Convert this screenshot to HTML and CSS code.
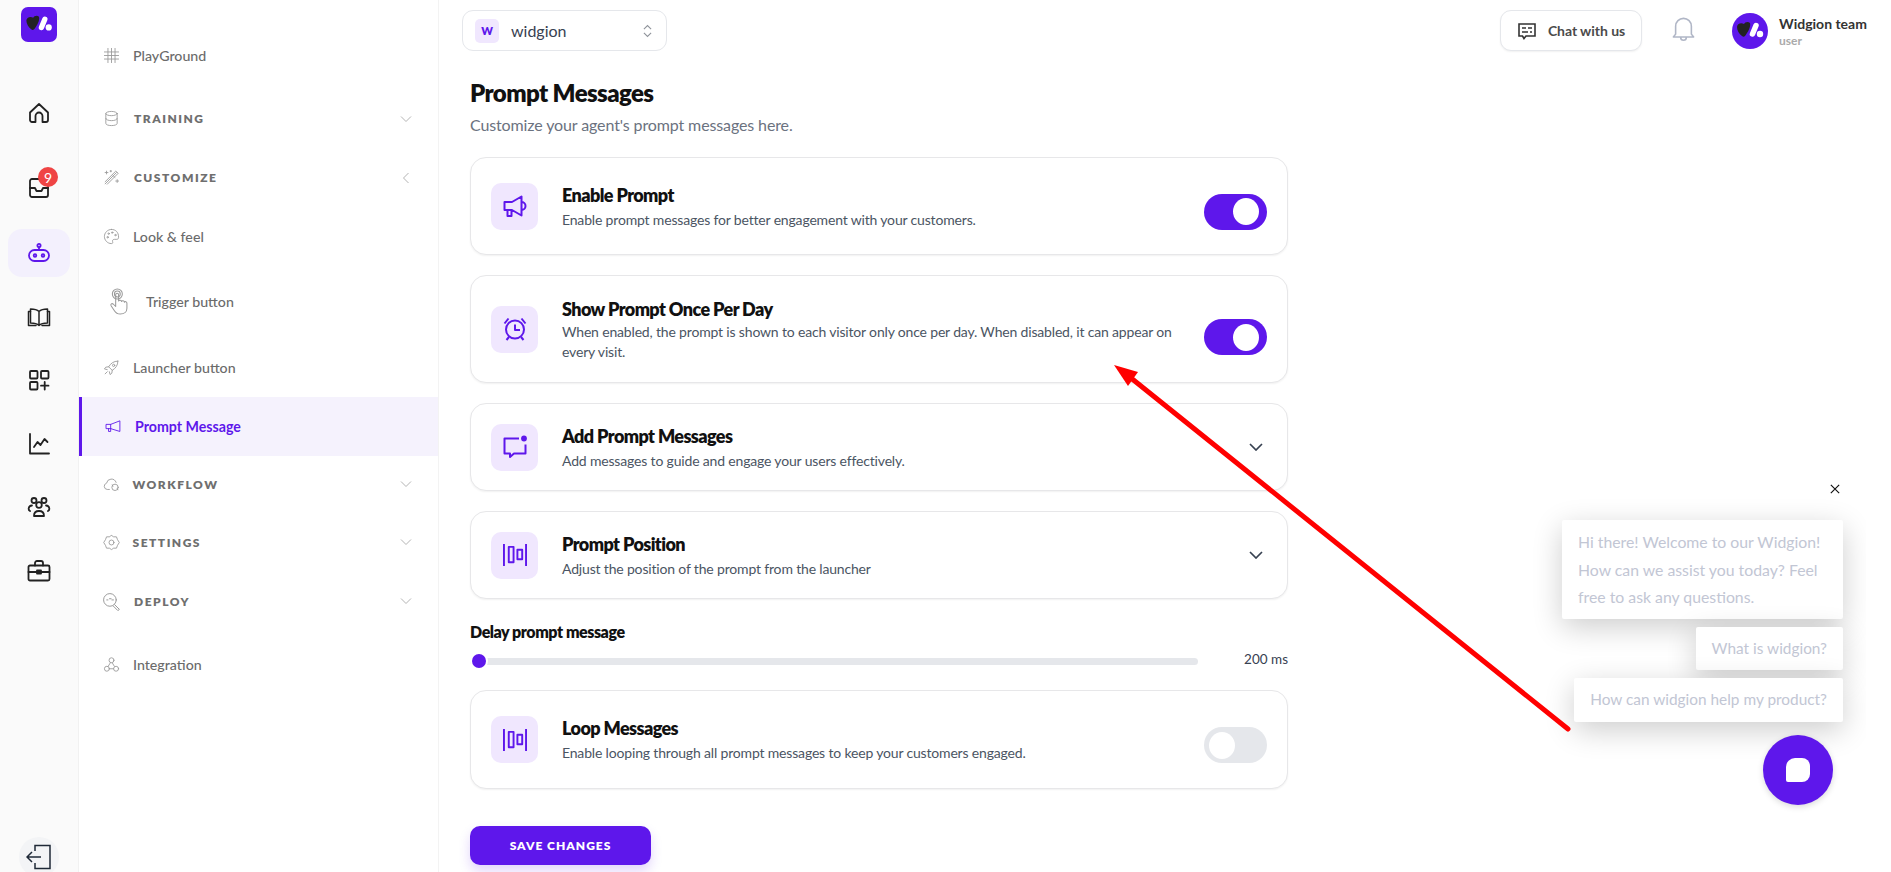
FILE: index.html
```html
<!DOCTYPE html>
<html lang="en">
<head>
<meta charset="utf-8">
<title>Prompt Messages</title>
<link rel="stylesheet" href="styles.css">
</head>
<body>
<div class="app">
  <nav class="rail">
    <div class="rail-logo">
      <svg viewBox="0 0 36 36" width="36" height="35"><path d="M5 14c0-3 4-5 7-3 1-2 4-3 6-1 1 4-2 9-5 13-1 1-2 1-3 0-3-2-5-6-5-9z" fill="#222"/><path d="M24 12.500 20.500 21" stroke="#fff" stroke-width="5.500" stroke-linecap="round"/><circle cx="28" cy="21" r="3.200" fill="#fff"/></svg>
    </div>
    <a class="rail-item rail-first"><svg class="ri" viewBox="0 0 24 24"><path d="M3 11.500 12 3l9 8.500V19a2 2 0 0 1-2 2h-3.500v-6a3.500 3.500 0 0 0-7 0v6H5a2 2 0 0 1-2-2z"/></svg></a>
    <a class="rail-item rail-inbox">
      <svg class="ri" viewBox="0 0 24 24"><path d="M5 3h14a2 2 0 0 1 2 2v14a2 2 0 0 1-2 2H5a2 2 0 0 1-2-2V5a2 2 0 0 1 2-2z"/><path d="M3 12h5l1.500 3h5l1.500-3h5"/></svg>
      <span class="badge">9</span>
    </a>
    <a class="rail-item rail-active"><svg class="ri ri-bot" viewBox="0 0 24 24"><circle cx="12" cy="3.500" r="1.600"/><path d="M12 5.100V8"/><rect x="2" y="8" width="20" height="11" rx="5.500"/><circle cx="8" cy="13.500" r="1.300"/><circle cx="16" cy="13.500" r="1.300"/></svg></a>
    <a class="rail-item"><svg class="ri ri-thin" viewBox="0 0 24 24"><path d="M12 6.500C10 4.500 7 4 3.500 4v14c3.500 0 6.500.5 8.500 2.500 2-2 5-2.500 8.500-2.500V4C17 4 14 4.500 12 6.500zM12 6.500v14"/><path d="M3.500 6.500H1.500v14H9M20.500 6.500h2v14H15"/></svg></a>
    <a class="rail-item"><svg class="ri" viewBox="0 0 24 24"><rect x="3" y="3" width="7.500" height="7.500" rx="1"/><rect x="14" y="3" width="7.500" height="7.500" rx="1"/><rect x="3" y="14" width="7.500" height="7.500" rx="1"/><path d="M17.700 14v7.500M14 17.700h7.500"/></svg></a>
    <a class="rail-item"><svg class="ri" viewBox="0 0 24 24"><path d="M3 2v19.500h19"/><path d="M7 15l3.500-5 3 3 4-6 3 3"/></svg></a>
    <a class="rail-item"><svg class="ri" viewBox="0 0 24 24"><circle cx="12" cy="10" r="2.800"/><circle cx="7" cy="5.500" r="2.500"/><circle cx="17" cy="5.500" r="2.500"/><path d="M7 21c0-3 2-5 5-5s5 2 5 5zM3 16c-2-1-2-5 2-5.500M21 16c2-1 2-5-2-5.500"/></svg></a>
    <a class="rail-item"><svg class="ri" viewBox="0 0 24 24"><rect x="1.500" y="6.500" width="21" height="15" rx="1.500"/><path d="M8 6.500V4a2 2 0 0 1 2-2h4a2 2 0 0 1 2 2v2.500M1.500 13h21"/><rect x="10" y="11.500" width="4" height="3" fill="#222" /></svg></a>
    <a class="rail-logout"><svg viewBox="0 0 26 26" width="26" height="26" fill="none" stroke="#1f2937" stroke-width="1.500"><path d="M9 7V1.500h15v23H9V19M1 13h14M6 8l-5 5 5 5"/></svg></a>
  </nav>

  <aside class="side">
    <a class="row r-67"><svg class="si" viewBox="0 0 24 24"><path d="M2 7h20M2 12h20M2 17h20M7 2v20M12 2v20M17 2v20"/></svg><span>PlayGround</span></a>
    <a class="row group"><svg class="si" viewBox="0 0 24 24"><ellipse cx="12" cy="5" rx="8" ry="3"/><path d="M4 5v14c0 1.700 3.500 3 8 3s8-1.300 8-3V5M4 12c0 1.700 3.500 3 8 3s8-1.300 8-3"/></svg><b>TRAINING</b><svg class="caret" viewBox="0 0 12 12"><path d="M1 3.500l5 5 5-5"/></svg></a>
    <a class="row group"><svg class="si" viewBox="0 0 24 24"><path d="M3 21 19 5M6 21.500 21.500 6 18 3 3 18M14 9l3 3M5 3v4M3 5h4M20 15v4M18 17h4M11 2v2M10 3h2"/></svg><b>CUSTOMIZE</b><svg class="caret" viewBox="0 0 12 12"><path d="M8.500 1l-5 5 5 5"/></svg></a>
    <a class="row"><svg class="si" viewBox="0 0 24 24"><path d="M12 2C6 2 2 7 2 12s4 10 10 10c2 0 2-1.500 1.500-3-.5-2 1-3 3-3h3c1.500 0 2.500-1 2.500-3C22 6 18 2 12 2z"/><circle cx="8" cy="8" r="1"/><circle cx="6.500" cy="13" r="1"/><circle cx="13" cy="6.500" r="1"/><circle cx="17.500" cy="10" r="1"/></svg><span>Look &amp; feel</span></a>
    <a class="row r-71"><svg class="si si-big" viewBox="0 0 24 32"><circle cx="10" cy="7" r="6"/><circle cx="10" cy="7" r="3.500"/><path d="M8 8v14l-3-3c-1.500-1-3.500 0-2.500 2l4 6c1.500 2.500 3.500 4 7 4 5 0 8-3 8-7v-6c0-2-2.500-2.500-3-1 0-2-3-2.500-3.500-1 0-2-3-2-3.500-.5V8c0-2.500-3.500-2.500-3.500 0z"/></svg><span>Trigger button</span></a>
    <a class="row r-60"><svg class="si" viewBox="0 0 24 24"><path d="M21 3c-6 0-10 3-13 8l5 5c5-3 8-7 8-13zM8 11l-4 .5L2 14l4 1M13 16l-.5 4-2.500 2-1-4"/><circle cx="15" cy="9" r="1.600"/><path d="M6 18l-3 3" /></svg><span>Launcher button</span></a>
    <a class="row active"><svg class="si" viewBox="0 0 24 24"><path d="M2 9h6l13-5v15L8 15H2zM8 9v6M5 15v4h3v-4"/></svg><span>Prompt Message</span></a>
    <a class="row group r-56"><svg class="si" viewBox="0 0 24 24"><path d="M9 19H6a4.500 4.500 0 0 1-1-8.800A7 7 0 0 1 18.500 9"/><circle cx="17" cy="16" r="4.500"/><path d="M13 12.500l1 2M21 19.500l-1-2"/></svg><b class="near">WORKFLOW</b><svg class="caret" viewBox="0 0 12 12"><path d="M1 3.500l5 5 5-5"/></svg></a>
    <a class="row group r-60"><svg class="si" viewBox="0 0 24 24"><path d="M12 2l3 2h4l1.500 4L23 12l-2.500 4L19 20h-4l-3 2-3-2H5l-1.500-4L1 12l2.500-4L5 4h4z"/><circle cx="12" cy="12" r="3.500"/></svg><b class="near">SETTINGS</b><svg class="caret" viewBox="0 0 12 12"><path d="M1 3.500l5 5 5-5"/></svg></a>
    <a class="row group r-58"><svg class="si si-deploy" viewBox="0 0 24 24"><circle cx="10" cy="10" r="8"/><path d="M6 10h1.500M9.500 8.500l2 0M12.500 10h2M16 16l6 6-2 1.500-6-6"/></svg><b class="far">DEPLOY</b><svg class="caret" viewBox="0 0 12 12"><path d="M1 3.500l5 5 5-5"/></svg></a>
    <a class="row r-68"><svg class="si" viewBox="0 0 24 24"><circle cx="12" cy="6" r="3.500"/><circle cx="5.500" cy="18" r="3.500"/><circle cx="18.500" cy="18" r="3.500"/><path d="M10.500 9.500 7 15M13 9.500l3 5M9 18h6"/></svg><span>Integration</span></a>
  </aside>

  <main class="main">
    <header class="top">
      <div class="select">
        <span class="select-mark">W</span>
        <span class="select-name">widgion</span>
        <svg class="updown" viewBox="0 0 10 14"><path d="M1 5l4-4 4 4M1 9l4 4 4-4"/></svg>
      </div>
      <div class="top-right">
        <button class="chat">
          <svg viewBox="0 0 20 20" width="20" height="20" fill="none" stroke="#333" stroke-width="1.600"><path d="M2 3h16v12H9l-2 2.500L5.500 15H2z"/><path d="M5 7h4M11 7h4M5 11h6M13 11h2"/></svg>
          Chat with us
        </button>
        <svg class="bell" viewBox="0 0 24 24"><path d="M5 17V10a7 7 0 0 1 14 0v7l2 2.500H3zM9.500 20a2.500 2.500 0 0 0 5 0"/></svg>
        <div class="user">
          <span class="avatar"><svg viewBox="0 0 36 36" width="36" height="36"><path d="M5 14c0-3 4-5 7-3 1-2 4-3 6-1 1 4-2 9-5 13-1 1-2 1-3 0-3-2-5-6-5-9z" fill="#222"/><path d="M24 12.500 20.500 21" stroke="#fff" stroke-width="5.500" stroke-linecap="round"/><circle cx="28" cy="21" r="3.200" fill="#fff"/></svg></span>
          <div class="user-text"><strong>Widgion team</strong><small>user</small></div>
        </div>
      </div>
    </header>

    <section class="content">
      <h1>Prompt Messages</h1>
      <p class="sub">Customize your agent's prompt messages here.</p>

      <div class="card c-98">
        <span class="ic"><svg viewBox="0 0 24 24"><path d="M1.500 8h7.500L18.500 2.500v19L9 16H1.500zM4.500 16v6h4v-6M18.500 8a4 4 0 0 1 0 8"/></svg></span>
        <div class="txt"><h3>Enable Prompt</h3><p>Enable prompt messages for better engagement with your customers.</p></div>
        <span class="toggle on t-low"></span>
      </div>

      <div class="card c-108">
        <span class="ic"><svg viewBox="0 0 24 24"><circle cx="12" cy="12.500" r="9"/><path d="M12 7.500v5.500h5M1.500 6.500l4-5M22.500 6.500l-4-5M6 20l-2.500 3M18 20l2.500 3"/></svg></span>
        <div class="txt"><h3>Show Prompt Once Per Day</h3><p>When enabled, the prompt is shown to each visitor only once per day. When disabled, it can appear on every visit.</p></div>
        <span class="toggle on t-lower"></span>
      </div>

      <div class="card c-88">
        <span class="ic"><svg viewBox="0 0 24 24"><path d="M16 3.500H1.500v15h5.500V22l4-3.500h11.500v-9"/><circle cx="21" cy="3.500" r="2.900" fill="#5e17eb" stroke="none"/></svg></span>
        <div class="txt"><h3>Add Prompt Messages</h3><p>Add messages to guide and engage your users effectively.</p></div>
        <svg class="chev" viewBox="0 0 14 8"><path d="M1 1l6 6 6-6"/></svg>
      </div>

      <div class="card c-88 last">
        <span class="ic"><svg viewBox="0 0 25 25"><path d="M1 1v23M24 1v23M6 4h5v16H6zM15 7h5v10h-5z"/></svg></span>
        <div class="txt"><h3>Prompt Position</h3><p>Adjust the position of the prompt from the launcher</p></div>
        <svg class="chev" viewBox="0 0 14 8"><path d="M1 1l6 6 6-6"/></svg>
      </div>

      <div class="delay">
        <h4>Delay prompt message</h4>
        <div class="slider">
          <span class="track"><i class="thumb"></i></span>
          <span class="val">200 ms</span>
        </div>
      </div>

      <div class="card c-99">
        <span class="ic"><svg viewBox="0 0 25 25"><path d="M1 1v23M24 1v23M6 4h5v16H6zM15 7h5v10h-5z"/></svg></span>
        <div class="txt"><h3>Loop Messages</h3><p>Enable looping through all prompt messages to keep your customers engaged.</p></div>
        <span class="toggle t-low"></span>
      </div>

      <button class="save">SAVE CHANGES</button>
    </section>
  </main>
</div>

<div class="widget">
  <span class="close"><svg viewBox="0 0 12 12" width="10" height="10"><path d="M1 1l10 10M11 1L1 11"/></svg></span>
  <div class="bubbles">
    <div class="bubble big">Hi there! Welcome to our Widgion! How can we assist you today? Feel free to ask any questions.</div>
    <div class="bubble">What is widgion?</div>
    <div class="bubble b3">How can widgion help my product?</div>
  </div>
</div>
<button class="launcher"><svg viewBox="0 0 24 24" width="24" height="24"><path d="M9 0h7a8 8 0 0 1 8 8v8a8 8 0 0 1-8 8H2a2 2 0 0 1-2-2V9a9 9 0 0 1 9-9z" fill="#fff"/></svg></button>

<svg class="arrow" viewBox="0 0 1891 872" width="1891" height="872"><path d="M1568 729 1126 374" stroke="#ff0000" stroke-width="5" stroke-linecap="round" fill="none"/><path d="M1114 365l24 7-10 14z" fill="#ff0000"/></svg>
</body>
</html>
```

FILE: styles.css
```css
* { box-sizing: border-box; }
html, body { margin: 0; height: 100%; overflow: hidden; }
body { font-family: Lato, "Liberation Sans", sans-serif; background: #fff; color: #111; }
a { color: inherit; text-decoration: none; }
h1, h3, h4, p { margin: 0; }

.app { display: flex; height: 872px; }

/* icon rail */
.rail { width: 79px; flex: none; background: #fafafa; border-right: 1px solid #f1f1f1; display: flex; flex-direction: column; align-items: center; padding-top: 7px; position: relative; }
.rail-logo { width: 36px; height: 35px; background: #5e17eb; border-radius: 7px; overflow: hidden; margin-bottom: 47px; margin-right: 1px; }
.rail-logo svg { display: block; }
.rail-item { width: 62px; height: 48px; display: flex; align-items: center; justify-content: center; position: relative; margin-bottom: 15.500px; border-radius: 14px; flex: none; }
.rail-first { margin-bottom: 27px; }
.rail-inbox { margin-bottom: 17px; }
.rail-active { background: #f3f0fd; }
.ri { width: 24px; height: 24px; fill: none; stroke: #222; stroke-width: 1.800; stroke-linejoin: round; stroke-linecap: round; }
.ri-thin { stroke-width: 1.500; }
.ri-bot { stroke: #5e17eb; margin-top: 1px; }
.badge { position: absolute; top: 3px; right: 12px; width: 20px; height: 20px; border-radius: 50%; background: #ef4444; color: #fff; font-size: 14px; display: flex; align-items: center; justify-content: center; }
.rail-logout { position: absolute; top: 837px; left: 19px; width: 40px; height: 40px; border-radius: 50%; background: #f3f4f6; display: flex; align-items: center; justify-content: center; }

/* sidebar */
.side { width: 360px; flex: none; padding-top: 22px; border-right: 1px solid #f3f3f3; }
.row { display: flex; align-items: center; height: 59px; padding-left: 24px; padding-right: 26px; font-size: 14.200px; font-weight: 500; color: #6b6b6b; }
.row span { margin-left: 13px; }
.r-56 { height: 56px; }
.r-58 { height: 58px; }
.r-60 { height: 60px; }
.r-67 { height: 67px; }
.r-68 { height: 68px; }
.r-71 { height: 71px; }
.si { width: 17px; height: 17px; flex: none; fill: none; stroke: #9a9a9a; stroke-width: 1.250; stroke-linejoin: round; stroke-linecap: round; }
.si-big { width: 20px; height: 27px; margin-left: 6px; }
.r-71 span { margin-left: 17px; }
.si-deploy { width: 19px; height: 19px; margin-left: -1px; margin-right: -2px; }
.group b { margin-left: 14px; font-size: 12px; font-weight: 800; letter-spacing: 1.500px; color: #6f6f6f; }
.group .near { margin-left: 12.500px; }
.group .far { margin-left: 15px; }
.caret { width: 12px; height: 12px; margin-left: auto; fill: none; stroke: #b4b4b4; stroke-width: 1; }
.active { background: #f5f2fd; border-left: 3px solid #5e17eb; padding-left: 23px; color: #5e17eb; font-weight: 700; }
.active .si { stroke: #5e17eb; }

/* main */
.main { flex: 1; min-width: 0; }
.top { display: flex; align-items: flex-start; justify-content: space-between; padding: 10px 0 0 23px; height: 67px; }
.select { width: 205px; height: 41px; border: 1px solid #e5e7eb; border-radius: 11px; display: flex; align-items: center; padding: 0 14px 0 12px; }
.select-mark { width: 24px; height: 24px; border-radius: 5px; background: #f0e7fe; color: #5e17eb; font-size: 11px; font-weight: 800; display: flex; align-items: center; justify-content: center; }
.select-name { margin-left: 12px; font-size: 16px; color: #374151; }
.updown { width: 9px; height: 14px; margin-left: auto; fill: none; stroke: #8f939a; stroke-width: 1.200; }
.top-right { display: flex; align-items: flex-start; }
.chat { width: 142px; height: 41px; border: 1px solid #e5e7eb; border-radius: 11px; background: #fff; display: flex; align-items: center; justify-content: center; gap: 11px; font: 700 14px Lato, sans-serif; letter-spacing: -.05px; color: #4b4b4b; box-shadow: 0 1px 2px rgba(0,0,0,.06); }
.bell { width: 27px; height: 27px; margin: 5px 0 0 28px; fill: none; stroke: #b0b6c6; stroke-width: 1.400; stroke-linejoin: round; }
.user { display: flex; align-items: center; margin: 3px 0 0 35px; width: 159px; }
.avatar { width: 36px; height: 36px; border-radius: 50%; background: #5e17eb; overflow: hidden; flex: none; }
.avatar svg { display: block; }
.user-text { margin-left: 11px; display: flex; flex-direction: column; }
.user-text strong { font-size: 14px; line-height: 18px; color: #333; font-weight: 700; }
.user-text small { font-size: 12px; line-height: 15px; color: #aaa; font-weight: 700; }

.content { margin-left: 31px; width: 818px; }
h1 { font-size: 24px; line-height: 32px; font-weight: 800; letter-spacing: -.6px; color: #111; margin-top: 10px; }
.sub { font-size: 16px; line-height: 24px; color: #6b7280; margin: 4px 0 20px; letter-spacing: -.12px; }

.card { display: flex; align-items: center; border: 1px solid #e7e7e9; border-radius: 16px; padding: 0 20px; background: #fff; margin-bottom: 20px; box-shadow: 0 1px 2px rgba(0,0,0,.06); }
.c-98 { height: 98px; }
.c-108 { height: 108px; }
.c-88 { height: 88px; }
.last { margin-bottom: 0; }
.c-99 { height: 99px; margin-bottom: 37px; }
.ic { width: 47px; height: 47px; flex: none; border-radius: 10px; background: #f0e7fe; display: flex; align-items: center; justify-content: center; }
.ic svg { width: 24px; height: 24px; fill: none; stroke: #5e17eb; stroke-width: 2; stroke-linejoin: round; }
.txt { margin-left: 24px; flex: 1; min-width: 0; }
.txt h3 { font-size: 18px; line-height: 24px; font-weight: 800; letter-spacing: -.6px; color: #111; }
.txt p { font-size: 14px; line-height: 20px; color: #4b5563; letter-spacing: -.17px; margin-top: 3px; }
.c-108 .txt p { margin-top: 1px; }
.toggle { width: 63px; height: 36px; flex: none; border-radius: 18px; background: #e5e7eb; display: flex; align-items: center; padding: 0 8px 0 5px; }
.t-low { margin-top: 11px; }
.t-lower { margin-top: 16px; }
.toggle::after { content: ""; width: 26px; height: 27px; border-radius: 50%; background: #fff; }
.toggle.on { background: #5e17eb; justify-content: flex-end; }
.chev { width: 14px; height: 8px; flex: none; margin-right: 4px; fill: none; stroke: #374151; stroke-width: 1.700; }

.delay { height: 91px; padding-top: 22px; }
.delay h4 { font-size: 16px; line-height: 22px; font-weight: 800; letter-spacing: -.45px; color: #111; }
.slider { display: flex; align-items: center; margin-top: 8px; }
.track { width: 728px; height: 7px; background: #e5e7eb; border-radius: 4px; display: flex; align-items: center; }
.thumb { width: 14px; height: 14px; border-radius: 50%; background: #5e17eb; margin-left: 2px; box-shadow: 0 0 0 2px #fff; }
.val { margin-left: auto; margin-bottom: 4px; font-size: 13.500px; color: #374151; }

.save { width: 181px; height: 39px; border: 0; border-radius: 10px; background: #5e17eb; color: #fff; font: 800 12px Lato, sans-serif; letter-spacing: 1px; box-shadow: 0 6px 12px rgba(94,23,235,.18); }

/* chat widget preview */
.widget { position: absolute; left: 1510px; top: 462px; width: 356px; height: 300px; overflow: hidden; }
.close { position: absolute; left: 311px; top: 13px; width: 28px; height: 28px; border-radius: 50%; background: #fff; display: flex; align-items: center; justify-content: center; }
.close svg { fill: none; stroke: #111; stroke-width: 1.400; }
.bubbles { position: absolute; left: 52px; top: 58px; width: 281px; display: flex; flex-direction: column; align-items: flex-end; gap: 8px; }
.bubble { background: #fff; border-radius: 2px; padding: 8px 16px; line-height: 27px; font-size: 15.400px; color: #c2c6d4; box-shadow: 0 8px 30px rgba(0,0,0,.2); }
.bubble.big { width: 281px; line-height: 27.500px; font-size: 15.800px; }
.b3 { padding: 8.500px 16px; }
.launcher { position: absolute; left: 1763px; top: 735px; width: 70px; height: 70px; border: 0; border-radius: 50%; background: #5e17eb; display: flex; align-items: center; justify-content: center; box-shadow: 0 2px 6px rgba(0,0,0,.15); }

.arrow { position: absolute; left: 0; top: 0; pointer-events: none; }
```
